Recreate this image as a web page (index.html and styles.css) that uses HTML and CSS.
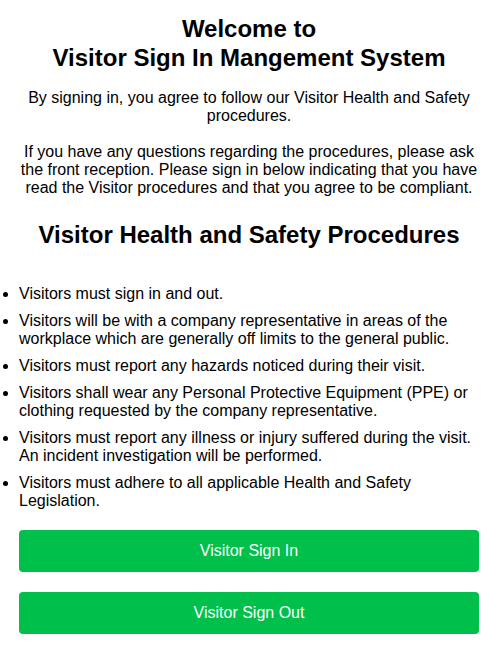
FILE: index.html
```html
<!DOCTYPE html>
<html>
<head>
    <meta charset="utf-8">
    <title>Visitor Sign In</title>
    <link rel="stylesheet" href="styles.css">
</head>
<body>
    <div class="page">
        <h1>Welcome to<br>Visitor Sign In Mangement System</h1>

        <p class="intro">
            By signing in, you agree to follow our Visitor Health and Safety procedures.
            <br><br>
            If you have any questions regarding the procedures, please ask the front reception. Please sign in below indicating that you have read the Visitor procedures and that you agree to be compliant.
        </p>

        <h2>Visitor Health and Safety Procedures</h2>

        <ul class="procedures">
            <li>Visitors must sign in and out.</li>
            <li>Visitors will be with a company representative in areas of the workplace which are generally off limits to the general public.</li>
            <li>Visitors must report any hazards noticed during their visit.</li>
            <li>Visitors shall wear any Personal Protective Equipment (PPE) or clothing requested by the company representative.</li>
            <li>Visitors must report any illness or injury suffered during the visit. An incident investigation will be performed.</li>
            <li>Visitors must adhere to all applicable Health and Safety Legislation.</li>
        </ul>

        <div class="actions">
            <a href="/sign-in"><button type="button" class="green-button">Visitor Sign In</button></a>
            <a href="/sign-out"><button type="button" class="green-button">Visitor Sign Out</button></a>
        </div>
    </div>
</body>
</html>
```

FILE: styles.css
```css
/* General body styling */
body {
    font-family: "Liberation Sans", Arial, sans-serif;
    background-color: #fff;
    color: #000;
    margin: 0;
    padding: 0;
}

.page {
    padding: 14px 15px 12px 19px;
}

/* Headers */
h1 {
    text-align: center;
    font-size: 24px;
    line-height: 29px;
    margin: 0 0 17px 0;
}

h2 {
    text-align: center;
    font-size: 24px;
    margin: 24px 0 36px 0;
}

.intro {
    text-align: center;
    font-size: 16px;
    margin: 0;
}

/* Procedures list */
.procedures {
    font-size: 16px;
    margin: 0 0 20px 0;
    padding: 0;
}

.procedures li {
    margin-bottom: 9px;
}

/* Buttons */
.actions a {
    display: block;
    text-decoration: none;
    margin-bottom: 20px;
}

.green-button {
    display: block;
    width: 100%;
    height: 42px;
    background-color: #00c04b;
    color: white;
    border: none;
    border-radius: 4px;
    font-family: "Liberation Sans", Arial, sans-serif;
    font-size: 16px;
    cursor: pointer;
    transition: background-color 0.3s ease;
}

.green-button:hover {
    background-color: #00a541;
}
```
